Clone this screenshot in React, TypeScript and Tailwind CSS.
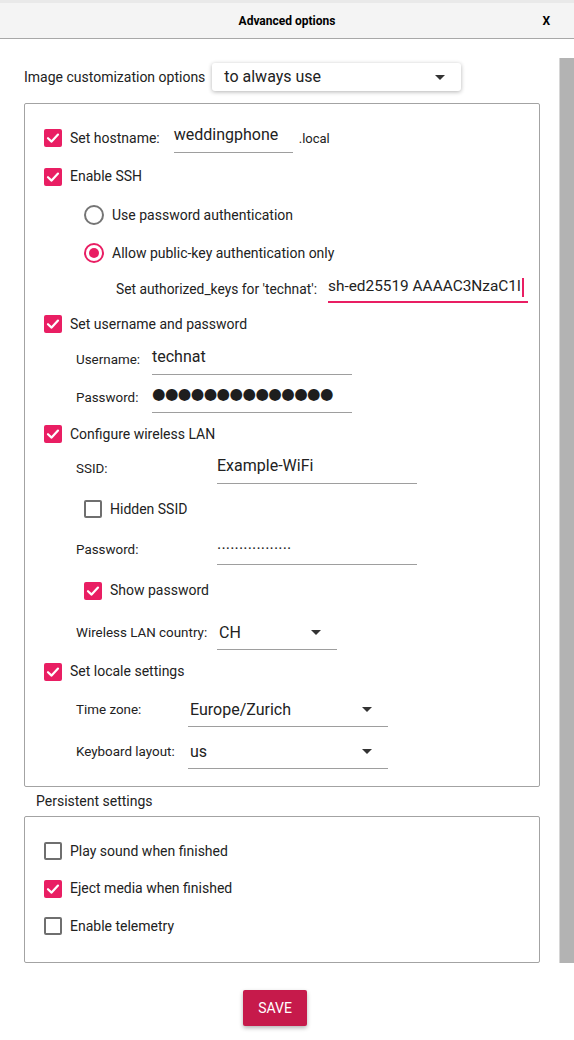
import React from 'react';

const ink = 'text-[#222222]';

function Check({ on }: { on: boolean }) {
  if (!on) {
    return <div className="w-[18px] h-[18px] shrink-0 rounded-[2px] border-2 border-[#6f6f6f] bg-white" />;
  }
  return (
    <div className="w-[18px] h-[18px] shrink-0 rounded-[2px] bg-[#e91e63] flex items-center justify-center">
      <svg width="18" height="18" viewBox="0 0 18 18">
        <polyline points="4,9.2 7.6,12.6 14,5.6" fill="none" stroke="#ffffff" strokeWidth="2.2" strokeLinecap="round" strokeLinejoin="round" />
      </svg>
    </div>
  );
}

function Radio({ on }: { on: boolean }) {
  return (
    <div
      className={`w-[20px] h-[20px] shrink-0 rounded-full border-2 flex items-center justify-center ${
        on ? 'border-[#e91e63]' : 'border-[#757575]'
      }`}
    >
      {on && <div className="w-[10px] h-[10px] rounded-full bg-[#e91e63]" />}
    </div>
  );
}

function Arrow() {
  return (
    <svg width="10" height="5" viewBox="0 0 10 5" className="shrink-0">
      <polygon points="0,0 10,0 5,5" fill="#333333" />
    </svg>
  );
}

function CheckRow({ on, label, h, indent = false }: { on: boolean; label: string; h: string; indent?: boolean }) {
  return (
    <div className={`flex items-center gap-2 ${h} ${indent ? 'pl-[59px]' : 'pl-[19px]'}`}>
      <Check on={on} />
      <span className={`text-[14px] ${ink}`}>{label}</span>
    </div>
  );
}

function Field({ value, w, className = '' }: { value: React.ReactNode; w: string; className?: string }) {
  return (
    <div className={`${w} h-[30px] pb-[5px] flex items-center border-b border-[#9e9e9e] ${className}`}>
      {value}
    </div>
  );
}

function Select({ value, w }: { value: string; w: string }) {
  return (
    <div className={`${w} h-[34px] pr-[16px] flex items-center justify-between border-b border-[#9e9e9e]`}>
      <span className={`text-[16px] pl-[2px] ${ink}`}>{value}</span>
      <Arrow />
    </div>
  );
}

const sub = `text-[13.4px] ${ink}`;

export default function App() {
  return (
    <div className="w-[574px] h-[1040px] bg-white overflow-hidden" style={{ fontFamily: 'Roboto, "Liberation Sans", sans-serif' }}>
      {/* Title bar */}
      <div className="h-[3px] bg-[#e9e9e9]" />
      <div className="h-[36px] bg-[#f4f4f4] border-b border-[#a8a8a8] grid grid-cols-[1fr_auto_1fr] items-center">
        <div />
        <div className="text-[12px] font-bold text-black">Advanced options</div>
        <div className="flex justify-end pr-[24px] text-[12px] font-bold text-black">X</div>
      </div>

      <div className="flex">
        {/* Scroll content */}
        <div className="w-[559px] pl-[24px] pr-[19px]">
          <div className="mt-[24px] h-[28px] flex items-center">
            <span className={`text-[14px] ${ink}`}>Image customization options</span>
            <div className="ml-[7px] w-[249px] h-[28px] flex items-center justify-between pl-[12px] pr-[16px] bg-white rounded-[3px] shadow-[0_1px_4px_rgba(0,0,0,0.3)]">
              <span className={`text-[16px] ${ink}`}>to always use</span>
              <Arrow />
            </div>
          </div>

          {/* Main options */}
          <div className="mt-[12px] h-[684px] border border-[#a3a3a3] rounded-[2px] pt-[15px]">
            <div className="flex items-center h-[38px] pl-[19px]">
              <Check on />
              <span className={`ml-2 text-[14px] ${ink}`}>Set hostname:</span>
              <Field
                w="w-[119px]"
                className="ml-[14px]"
                value={<span className={`text-[16px] ${ink}`}>weddingphone</span>}
              />
              <span className={`ml-[6px] mt-[2px] text-[13px] ${ink}`}>.local</span>
            </div>
            <CheckRow on label="Enable SSH" h="h-[39px]" />
            <div className="flex items-center gap-2 h-[38px] pl-[59px]">
              <Radio on={false} />
              <span className={`text-[14px] ${ink}`}>Use password authentication</span>
            </div>
            <div className="flex items-center gap-2 h-[38px] pl-[59px]">
              <Radio on />
              <span className={`text-[14px] ${ink}`}>Allow public-key authentication only</span>
            </div>
            <div className="flex items-center h-[34px] pl-[91px]">
              <span className={`text-[13.8px] ${ink} w-[212px] whitespace-nowrap`}>Set authorized_keys for 'technat':</span>
              <div className="w-[200px] h-[28px] pb-[2px] flex items-center border-b-2 border-[#e91e63] overflow-hidden whitespace-nowrap">
                <span className={`text-[15.4px] ${ink}`}>sh-ed25519 AAAAC3NzaC1l</span>
                <span className="ml-[1px] w-[2px] h-[19px] shrink-0 bg-[#e91e63]" />
              </div>
            </div>
            <CheckRow on label="Set username and password" h="h-[36px]" />
            <div className="flex items-center h-[36px] pl-[51px]">
              <span className={`${sub} w-[76px]`}>Username:</span>
              <Field w="w-[200px]" value={<span className={`text-[16px] ${ink}`}>technat</span>} />
            </div>
            <div className="flex items-center h-[40px] pl-[51px]">
              <span className={`${sub} w-[76px]`}>Password:</span>
              <Field
                w="w-[200px]"
                value={<span className="text-[15.5px] tracking-[-0.6px] text-[#1e1e1e]" style={{ fontFamily: '"DejaVu Sans", sans-serif' }}>●●●●●●●●●●●●●●</span>}
              />
            </div>
            <CheckRow on label="Configure wireless LAN" h="h-[32px]" />
            <div className="flex items-center h-[38px] pl-[51px]">
              <span className={`${sub} w-[141px]`}>SSID:</span>
              <Field w="w-[200px]" value={<span className={`text-[16px] ${ink}`}>Example-WiFi</span>} />
            </div>
            <CheckRow on={false} label="Hidden SSID" h="h-[42px]" indent />
            <div className="flex items-center h-[40px] pl-[51px]">
              <span className={`${sub} w-[141px]`}>Password:</span>
              <Field
                w="w-[200px]"
                value={<span className={`text-[16px] tracking-[0.2px] mt-[4px] ${ink}`}>·················</span>}
              />
            </div>
            <CheckRow on label="Show password" h="h-[41px]" indent />
            <div className="flex items-center h-[44px] pl-[51px]">
              <span className={`${sub} w-[141px]`}>Wireless LAN country:</span>
              <Select value="CH" w="w-[120px]" />
            </div>
            <CheckRow on label="Set locale settings" h="h-[33px]" />
            <div className="flex items-center h-[44px] pl-[51px]">
              <span className={`${sub} w-[112px]`}>Time zone:</span>
              <Select value="Europe/Zurich" w="w-[200px]" />
            </div>
            <div className="flex items-center h-[40px] pl-[51px]">
              <span className={`${sub} w-[112px]`}>Keyboard layout:</span>
              <Select value="us" w="w-[200px]" />
            </div>
          </div>

          <div className="h-[29px] flex items-center pl-[12px]">
            <span className={`text-[14px] ${ink}`}>Persistent settings</span>
          </div>

          {/* Persistent settings */}
          <div className="h-[147px] border border-[#a3a3a3] rounded-[2px] pt-[15px]">
            <CheckRow on={false} label="Play sound when finished" h="h-[38px]" />
            <CheckRow on label="Eject media when finished" h="h-[37px]" />
            <CheckRow on={false} label="Enable telemetry" h="h-[38px]" />
          </div>

          <div className="mt-[27px] pl-[219px]">
            <button className="w-[64px] h-[36px] rounded-[2px] bg-[#c61a4b] text-white text-[14px] shadow-[0_2px_4px_rgba(0,0,0,0.3)]">
              SAVE
            </button>
          </div>
        </div>

        {/* Scrollbar */}
        <div className="w-[15px]">
          <div className="mt-[19px] h-[905px] bg-[#b3b3b3] border-l border-[#d6d6d6]" />
        </div>
      </div>
    </div>
  );
}
